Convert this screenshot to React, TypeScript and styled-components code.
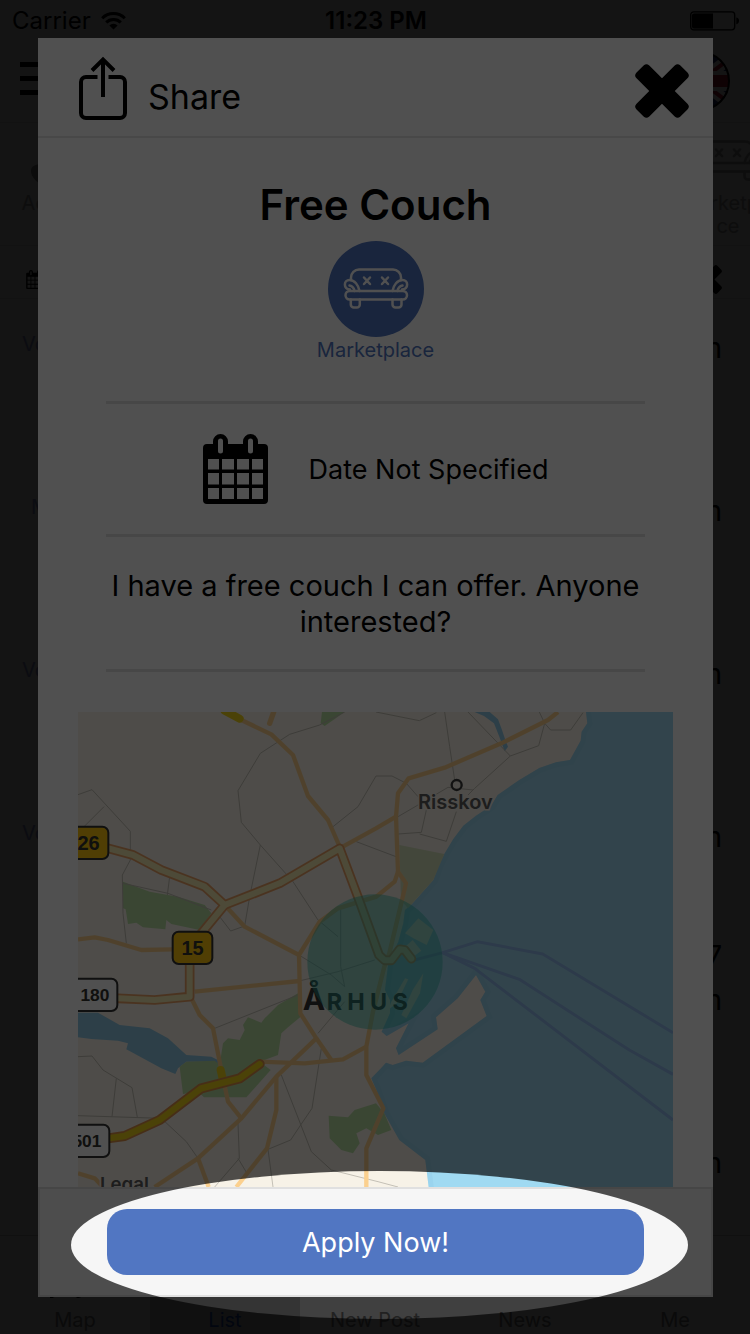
import React from "react";
import styled, { createGlobalStyle } from "styled-components";

const GlobalStyle = createGlobalStyle`
  *, *::before, *::after { box-sizing: border-box; }
  body { margin: 0; font-family: Inter, "Liberation Sans", sans-serif; color: #000; background: #fff; }
  h1, p, ul { margin: 0; padding: 0; }
  button { font: inherit; color: inherit; background: none; border: 0; padding: 0; cursor: pointer; }
  svg { display: block; flex: none; }
`;

const Screen = styled.div`
  position: relative;
  height: 100vh;
  min-height: 900px;
  overflow: hidden;
`;

/* ---------- page behind the dialog ---------- */

const Page = styled.div`
  display: flex;
  flex-direction: column;
  height: 100%;
  background: #fdfdfd;
`;

const StatusBar = styled.div`
  display: grid;
  grid-template-columns: 1fr auto 1fr;
  align-items: center;
  height: 41px;
  padding: 0 10px 0 12px;
  font-size: 24px;
`;

const Carrier = styled.div`
  display: flex;
  align-items: center;
  gap: 10px;
`;

const Clock = styled.div`
  font-weight: 600;
`;

const BatteryCell = styled.div`
  justify-self: end;
`;

const TopBar = styled.header`
  display: flex;
  align-items: center;
  justify-content: space-between;
  height: 82px;
  padding: 0 20px 2px;
  border-bottom: 1px solid #e4e4e4;
`;

const MenuButton = styled.button`
  padding-bottom: 4px;
`;

const Categories = styled.nav`
  display: flex;
  justify-content: space-between;
  height: 123px;
  padding-top: 7px;
  margin-right: -28px;
  border-bottom: 1px solid #e4e4e4;
  color: #a8a8a8;
`;

const Category = styled.button`
  width: 100px;
  display: flex;
  flex-direction: column;
  align-items: center;
  font-size: 20px;
  line-height: 23px;
`;

const Filters = styled.div`
  display: flex;
  align-items: center;
  justify-content: space-between;
  height: 53px;
  padding: 15px 28px 0 26px;
  border-bottom: 1px solid #e4e4e4;
`;

const List = styled.ul`
  flex: 1;
  min-height: 0;
  overflow: hidden;
  list-style: none;
`;

const ListRow = styled.li`
  display: flex;
  justify-content: space-between;
  height: 163px;
  padding: 0 28px 92px 22px;
`;

const RowLabel = styled.span<{ $indent?: number }>`
  padding-top: 33px;
  padding-left: ${(p) => p.$indent ?? 0}px;
  font-size: 20px;
  line-height: 24px;
  color: #9196d8;
`;

const RowMeta = styled.span`
  display: flex;
  flex-direction: column;
  justify-content: flex-end;
  align-items: flex-end;
  font-size: 28px;
  line-height: 44px;
`;

const TabBar = styled.nav`
  display: grid;
  grid-template-columns: repeat(5, 1fr);
  height: 99px;
  flex: none;
  border-top: 1px solid #d0d0d0;
`;

const Tab = styled.button<{ $active?: boolean }>`
  display: flex;
  flex-direction: column;
  align-items: center;
  justify-content: flex-end;
  gap: 10px;
  padding-bottom: 2px;
  font-size: 20px;
  line-height: 24px;
  color: ${(p) => (p.$active ? "#2458c8" : "#848484")};
  background: ${(p) => (p.$active ? "#d0d0d0" : "transparent")};
`;

/* ---------- dialog ---------- */

const Backdrop = styled.div`
  position: absolute;
  inset: 0;
  padding: 38px 37px 37px 38px;
  background: rgba(0, 0, 0, 0.75);
`;

const Dialog = styled.section`
  display: flex;
  flex-direction: column;
  height: 100%;
  background: #fff;
`;

const DialogHeader = styled.header`
  display: flex;
  align-items: center;
  justify-content: space-between;
  height: 100px;
  flex: none;
  padding: 2px 24px 0 40px;
  border-bottom: 2px solid #e6e6e6;
`;

const ShareButton = styled.button`
  display: flex;
  align-items: center;
  gap: 20px;
  font-size: 34px;
  line-height: 44px;
  span { padding-top: 18px; }
`;

const CloseButton = styled.button`
  padding-top: 6px;
`;

const DialogBody = styled.div`
  flex: 1;
  min-height: 0;
  display: flex;
  flex-direction: column;
  padding: 41px 40px 0;
`;

const Summary = styled.div`
  display: flex;
  flex-direction: column;
  align-items: center;
  margin: 0 28px;
  padding-bottom: 38px;
`;

const Title = styled.h1`
  font-size: 42px;
  line-height: 52px;
  font-weight: 600;
  margin-bottom: 10px;
`;

const Badge = styled.div`
  width: 96px;
  height: 96px;
  border-radius: 50%;
  background: #5176c2;
  color: #fff;
`;

const BadgeLabel = styled.div`
  font-size: 20px;
  line-height: 26px;
  color: #5176c2;
`;

const DateRow = styled.div`
  display: flex;
  align-items: center;
  justify-content: center;
  gap: 41px;
  height: 133px;
  margin: 0 28px;
  border-top: 3px solid #e3e3e3;
  font-size: 27px;
`;

const Description = styled.p`
  margin: 0 28px 40px;
  padding: 31px 0 29px;
  border-top: 3px solid #e3e3e3;
  border-bottom: 3px solid #e3e3e3;
  font-size: 29px;
  line-height: 36px;
  text-align: center;
`;

const MapFrame = styled.div`
  flex: 1;
  min-height: 0;
  overflow: hidden;
  background: #f7f2e7;
  svg { width: 100%; height: 100%; }
`;

const DialogFooter = styled.footer`
  flex: none;
  padding: 20px 67px;
  background: #f6f6f6;
  border: 2px solid #e0e0e0;
`;

const ApplyButton = styled.button`
  display: block;
  width: 100%;
  height: 66px;
  border-radius: 20px;
  background: #5176c2;
  color: #fff;
  font-size: 27px;
`;

const Spotlight = styled.div`
  position: absolute;
  left: 71px;
  right: 62px;
  bottom: 15px;
  height: 148px;
  border-radius: 50%;
  box-shadow: 0 0 0 3000px rgba(0, 0, 0, 0.685);
  pointer-events: none;
`;

/* ---------- icons ---------- */

const WifiIcon = () => (
  <svg width="25" height="18" viewBox="0 0 25 18" fill="none" stroke="#000" strokeWidth="3">
    <path d="M1.2 6.2a16 16 0 0 1 22.6 0" />
    <path d="M5.2 10.4a10.4 10.4 0 0 1 14.6 0" />
    <path d="M12.5 17.6 8.4 13.4a5.8 5.8 0 0 1 8.2 0z" fill="#000" stroke="none" />
  </svg>
);

const BatteryIcon = () => (
  <svg width="50" height="20" viewBox="0 0 50 20">
    <rect x=".7" y=".8" width="44" height="18" rx="3" fill="none" stroke="#000" strokeWidth="1.3" />
    <path d="M4 2.5h19v15H4a2 2 0 0 1-2-2v-11a2 2 0 0 1 2-2z" />
    <path d="M46.300 6.500q2.700 .5 2.700 3.300t-2.700 3.400z" />
  </svg>
);

const MenuIcon = () => (
  <svg width="44" height="34" viewBox="0 0 44 34">
    <path d="M0 0h44v5H0zM0 14h44v5H0zM0 28h44v5H0z" />
  </svg>
);

const FlagIcon = () => (
  <svg width="60" height="60" viewBox="0 0 60 60">
    <clipPath id="flag"><circle cx="30" cy="30" r="29" /></clipPath>
    <g clipPath="url(#flag)">
      <path fill="#23307e" d="M0 0h60v60H0z" />
      <path stroke="#fff" strokeWidth="12" d="M-6 3 66 57M66 3-6 57" />
      <path stroke="#c8203a" strokeWidth="4" d="M-6 3 66 57M66 3-6 57" />
      <path stroke="#fff" strokeWidth="20" d="M30 0v60M0 30h60" />
      <path stroke="#c8203a" strokeWidth="12" d="M30 0v60M0 30h60" />
    </g>
    <circle cx="30" cy="30" r="29" fill="none" stroke="#000" strokeWidth="2" />
  </svg>
);

const CouchArt = () => (
  <g fill="none" stroke="currentColor" strokeWidth="2.500" strokeLinecap="round" strokeLinejoin="round">
    <path d="M23 39v-2.500a8 8 0 0 1 8-8h34a8 8 0 0 1 8 8V39" />
    <path d="M31.500 50C30.500 44 26.500 39 21.500 39c-6 0-6.500 8.500 .5 9.500M21.500 44.500c2.500 .5 4.500 2.500 5 5.500" />
    <path d="M64.500 50c1-6 5-11 10-11 6 0 6.500 8.500-.5 9.500M74.500 44.500c-2.500 .5-4.500 2.500-5 5.500" />
    <rect x="17.500" y="50" width="61.500" height="8.500" rx="4.200" />
    <path d="M22.800 58.500v5a3 3 0 0 0 3 3h3a3 3 0 0 0 3-3v-5M64.500 58.500v5a3 3 0 0 0 3 3h3a3 3 0 0 0 3-3v-5" />
    <path d="m36 36.500 6 6.500m0-6.500-6 6.500M54 36.500l6 6.500m0-6.500-6 6.500" />
  </g>
);

const CalendarIcon = ({ width }: { width: number }) => (
  <svg width={width} height={Math.round((width * 70) / 65)} viewBox="0 0 65 70">
    <path
      fillRule="evenodd"
      d="M4 10H10V7.500a7.500 7.500 0 0 1 15 0V10H40V7.500a7.500 7.500 0 0 1 15 0V10H61a4 4 0 0 1 4 4V66a4 4 0 0 1-4 4H4a4 4 0 0 1-4-4V14a4 4 0 0 1 4-4z
      M15 7v10a2.500 2.500 0 0 0 5 0V7a2.500 2.500 0 0 0-5 0z M45 7v10a2.500 2.500 0 0 0 5 0V7a2.500 2.500 0 0 0-5 0z
      M5 25v10.600h11V25z M19 25v10.600h12V25z M34 25v10.600h12V25z M49 25v10.600h11V25z
      M5 39v11.600h11V39z M19 39v11.600h12V39z M34 39v11.600h12V39z M49 39v11.600h11V39z
      M5 54v11h11V54z M19 54v11h12V54z M34 54v11h12V54z M49 54v11h11V54z"
    />
  </svg>
);

const CrossIcon = ({ size }: { size: number }) => (
  <svg width={size} height={size} viewBox="-27 -27 54 54">
    <rect x="-31" y="-9" width="62" height="18" rx="4" transform="rotate(45)" />
    <rect x="-31" y="-9" width="62" height="18" rx="4" transform="rotate(-45)" />
  </svg>
);

const ShareIcon = () => (
  <svg width="50" height="64" viewBox="0 0 50 64" fill="none" stroke="#000" strokeWidth="4">
    <path d="M19.500 21H8a5 5 0 0 0-5 5v31a5 5 0 0 0 5 5h34a5 5 0 0 0 5-5V26a5 5 0 0 0-5-5H30.500" />
    <path d="M25 41V4M14 14.500 25 3.500l11 11" />
  </svg>
);

/* ---------- map ---------- */

const thinRoads = [
  "0 284 42 269 157 394 157 480 133 525 135 640 145 730",
  "20 378 78 320",
  "894 36 1024 62 1075 38",
  "800 36 725 75 635 103 547 160 480 272 490 367 547 435 645 545 720 660 780 710",
  "547 435 515 590 500 678 458 693 425 650",
  "135 550 270 580 400 630",
  "275 530 268 585",
  "765 380 840 320 894 228 942 228 985 250 1020 290",
  "835 425 954 470",
  "1100 36 1115 140 1130 240",
  "1170 36 1297 168 1190 265 1170 285",
  "1297 168 1382 137 1400 70 1384 36",
  "1400 70 1418 90 1478 90 1515 38",
  "960 350 1020 315 1110 262 1185 270",
  "960 402 1030 397 1045 330",
  "1025 402 1105 424 1135 335",
  "788 630 788 800 800 860",
  "410 985 660 885",
  "663 765 760 825 800 860",
  "663 843 780 815 890 780",
  "0 1070 42 1068 75 1110 162 1163 178 1252",
  "115 1135 102 1250",
  "0 1247 250 1255 325 1325 360 1375",
  "610 1125 700 1355 760 1410 900 1445 960 1461",
  "730 1045 702 1225 668 1275 638 1320 570 1348 585 1461",
  "480 1270 484 1375 410 1461",
  "480 1375 510 1425",
  "800 905 720 1000",
];

const minorRoads = [
  "490 60 580 103 645 165 690 288 750 360 785 440",
  "785 445 894 385 954 350 960 280 992 235 1100 203 1270 130 1410 60 1440 36",
  "954 350 960 515 984 550 934 760 919 800 885 935 865 1040 865 1125 916 1225 865 1345 865 1461",
  "960 515 950 545 895 590 780 625 725 665 663 765 667 940 715 1015 760 1080",
  "440 615 500 680 663 765",
  "0 718 50 712 90 720 190 750 285 748",
  "350 875 665 843",
  "340 895 365 945 405 985 430 1110 450 1205 490 1255",
  "545 1085 680 1090 795 1078 865 1040",
  "715 1015 595 1130 490 1255 360 1375 230 1461",
  "595 1130 595 1230 567 1345 475 1461",
  "360 1375 392 1461",
  "0 1420 50 1435 75 1461",
];

const majorRoads = [
  "80 442 165 465 250 510 380 560 440 615 605 550 785 445 845 605 903 765 920 781 940 781 965 748 980 750 1000 776",
  "440 615 370 700 335 760 335 890 230 900 120 895",
];

const ferries = [
  "1094 758 1199 725 1394 762 1785 998",
  "1010 780 1094 758 1324 838 1654 1050 1785 1123",
  "1094 758 1190 805 1785 1260",
];

const coast =
  "1524 -30 1524 36 1528 70 1511 95 1508 122 1476 180 1434 187 1384 204 1324 240 1259 285 1239 318 1194 347 1156 377 1126 417 1099 462 1080 500 1066 540 1004 610 981 630 976 670 961 725 931 790 921 870 936 900 936 940 911 995 926 1008 992 970 954 1045 962 1065 1079 988 1074 952 1139 895 1194 825 1222 875 1207 900 1226 948 1034 1088 984 1082 944 1095 924 1088 909 1105 880 1135 895 1170 919 1240 964 1320 1042 1380 1052 1461 1052 1540 1900 1540 1900 -30";

const ShieldText = styled.text<{ $size: number }>`
  font: bold ${(p) => p.$size}px "Liberation Sans", sans-serif;
  text-anchor: end;
  fill: #33332f;
`;

const Place = styled.text<{ $size: number }>`
  font: 600 ${(p) => p.$size}px Inter, sans-serif;
  fill: #5c5c5c;
  stroke: #f7f2e7;
  stroke-width: 9px;
  paint-order: stroke;
`;

const City = styled.text<{ $size: number }>`
  font: 700 ${(p) => p.$size}px Inter, "Liberation Sans", sans-serif;
  letter-spacing: 16px;
  fill: #333;
`;

const Shield = ({ x, y, w, fill, label }: { x: number; y: number; w: number; fill: string; label: string }) => {
  const long = label.length > 2;
  return (
    <g>
      <rect x={x} y={y} width={w} height="97" rx="18" fill={fill} stroke="#333" strokeWidth="6" />
      <ShieldText $size={long ? 52 : 60} x={x + w - (long ? 24 : 26)} y={y + (long ? 67 : 69)}>{label}</ShieldText>
    </g>
  );
};

const CityMap = () => (
  <svg viewBox="0 36 1785 1425" preserveAspectRatio="xMidYMin slice" role="img" aria-label="Map of Århus">
    <clipPath id="sea"><polygon points={coast} /></clipPath>
    <rect width="1785" height="1500" fill="#f7f2e7" />
    <polygon points={coast} fill="#a0daf2" />
    <polygon points={coast} clipPath="url(#sea)" fill="none" stroke="#90cbe8" strokeWidth="30" opacity=".4" />
    <g fill="#90c8e6">
      <path d="M1190 36h45l25 22 12 32 10 30 8 20-10 14-16-44-16-40-30-22z" />
      <polygon points="0 938 60 938 125 975 215 985 270 1015 325 1065 400 1070 430 1085 440 1045 447 1092 420 1100 400 1085 325 1085 300 1105 292 1122 250 1105 145 1048 150 1030 120 1022 40 1017 0 1012" />
    </g>
    <g fill="#b9dea3">
      <polygon points="135 545 215 575 300 590 380 615 400 640 365 690 280 672 265 660 262 688 195 682 175 668 150 672 143 628 135 625" />
      <polygon points="732 36 800 36 740 78 728 70" />
      <polygon points="964 435 1099 462 1066 540 990 625 969 600" fill="#d6e3bd" />
      <polygon points="660 880 668 950 630 982 610 1000 600 1065 545 1085 578 1110 505 1192 378 1192 360 1175 315 1182 305 1100 325 1085 410 1082 425 1095 435 1030 450 1015 485 1020 500 990 495 975 510 952 550 968 560 955 600 915" />
      <polygon points="752 1247 810 1252 830 1230 894 1210 919 1240 940 1290 900 1305 865 1285 835 1300 845 1330 825 1360 790 1350 755 1315" />
    </g>
    <g fill="#f7f2e7">
      <polygon points="1021 655 1066 690 1046 735 1006 715 981 700" />
      <polygon points="981 740 1004 720 1030 752 1006 770" />
      <polygon points="981 835 991 838 956 910 930 930 940 905" />
      <polygon points="1036 820 1026 880 985 955 970 945 1004 870" />
      <polygon points="880 1135 919 1240 940 1290 964 1320 900 1330" opacity="0" />
    </g>
    <g fill="none" strokeLinejoin="round">
      {thinRoads.map((p) => <polyline key={p} points={p} stroke="#c4c0b6" strokeWidth="3" />)}
      {ferries.map((p) => <polyline key={p} points={p} stroke="#8fb9ea" strokeWidth="9" />)}
      {minorRoads.map((p) => <polyline key={p} points={p} stroke="#fbd08e" strokeWidth="13" />)}
      <path d="m587 36-12 34" stroke="#fbd08e" strokeWidth="16" strokeLinecap="round" />
      {majorRoads.map((p) => <polyline key={p} points={p} stroke="#eda468" strokeWidth="29" strokeLinecap="round" />)}
      {majorRoads.map((p) => <polyline key={p} points={p} stroke="#f6ecb4" strokeWidth="18" strokeLinecap="round" />)}
      <path d="M428 1110 436 1145M440 32 485 56" stroke="#f0d21c" strokeWidth="24" strokeLinecap="round" />
      <polyline points="90 1315 140 1308 245 1260 370 1165 485 1135 545 1092" stroke="#e0924a" strokeWidth="30" strokeLinecap="round" />
      <polyline points="90 1315 140 1308 245 1260 370 1165 485 1135 545 1092" stroke="#f0d21c" strokeWidth="19" strokeLinecap="round" />
    </g>
    <Shield x={-60} y={380} w={151} fill="#fdc70e" label="26" />
    <Shield x={284} y={695} w={119} fill="#fdc70e" label="15" />
    <Shield x={-60} y={836} w={178} fill="#fdfdfd" label="180" />
    <Shield x={-60} y={1274} w={154} fill="#fdfdfd" label="501" />
    <circle cx="1136" cy="255" r="15" fill="#f7f2e7" stroke="#3a3a3a" strokeWidth="7" />
    <Place $size={60} x="1020" y="327">Risskov</Place>
    <Place $size={56} x="66" y="1474">Legal</Place>
    <City $size={90} x="674" y="930">Å</City>
    <City $size={70} x="746" y="930">RHUS</City>
    <circle cx="891" cy="786" r="203" fill="#26b5a4" opacity=".45" />
  </svg>
);

/* ---------- screen ---------- */

const rows: { label?: string; indent?: number; meta: string[] }[] = [
  { label: "Volunteer", meta: ["km"] },
  { label: "Market", indent: 9, meta: ["km"] },
  { label: "Volunteer", meta: ["km"] },
  { label: "Volunteer", meta: ["km"] },
  { meta: ["17", "km"] },
  { meta: ["km"] },
];

export default function App() {
  return (
    <>
      <GlobalStyle />
      <Screen>
        <Page>
          <StatusBar>
            <Carrier>Carrier <WifiIcon /></Carrier>
            <Clock>11:23 PM</Clock>
            <BatteryCell><BatteryIcon /></BatteryCell>
          </StatusBar>
          <TopBar>
            <MenuButton aria-label="Menu"><MenuIcon /></MenuButton>
            <button aria-label="Language"><FlagIcon /></button>
          </TopBar>
          <Categories>
            <Category>
              <svg width="96" height="62" viewBox="0 17 96 62">
                <path fill="#8e8e8e" d="M48 78C34 69 29 64 29 58c0-8 14-9 19 0 5-9 19-8 19 0 0 6-5 11-19 20z" />
              </svg>
              Adopt
            </Category>
            <Category>
              <svg width="96" height="62" viewBox="0 17 96 62"><CouchArt /></svg>
              Marketpla<br />ce
            </Category>
          </Categories>
          <Filters>
            <CalendarIcon width={18} />
            <CrossIcon size={29} />
          </Filters>
          <List>
            {rows.map((row, i) => (
              <ListRow key={i}>
                <RowLabel $indent={row.indent}>{row.label}</RowLabel>
                <RowMeta>{row.meta.map((line) => <span key={line}>{line}</span>)}</RowMeta>
              </ListRow>
            ))}
          </List>
          <TabBar>
            <Tab>
              <svg width="50" height="30" viewBox="0 0 50 30" fill="none" stroke="#000" strokeWidth="4">
                <path d="M2 28 16 22l12 6 18-6V6L28 12 16 4 2 10z" />
              </svg>
              Map
            </Tab>
            <Tab $active>List</Tab>
            <Tab>New Post</Tab>
            <Tab>News</Tab>
            <Tab>Me</Tab>
          </TabBar>
        </Page>

        <Backdrop>
          <Dialog role="dialog" aria-labelledby="post-title">
            <DialogHeader>
              <ShareButton><ShareIcon /><span>Share</span></ShareButton>
              <CloseButton aria-label="Close"><CrossIcon size={54} /></CloseButton>
            </DialogHeader>
            <DialogBody>
              <Summary>
                <Title id="post-title">Free Couch</Title>
                <Badge><svg width="96" height="96" viewBox="0 0 96 96"><CouchArt /></svg></Badge>
                <BadgeLabel>Marketplace</BadgeLabel>
              </Summary>
              <DateRow><CalendarIcon width={65} /><span>Date Not Specified</span></DateRow>
              <Description>I have a free couch I can offer. Anyone interested?</Description>
              <MapFrame><CityMap /></MapFrame>
            </DialogBody>
            <DialogFooter>
              <ApplyButton>Apply Now!</ApplyButton>
            </DialogFooter>
          </Dialog>
        </Backdrop>
        <Spotlight />
      </Screen>
    </>
  );
}
